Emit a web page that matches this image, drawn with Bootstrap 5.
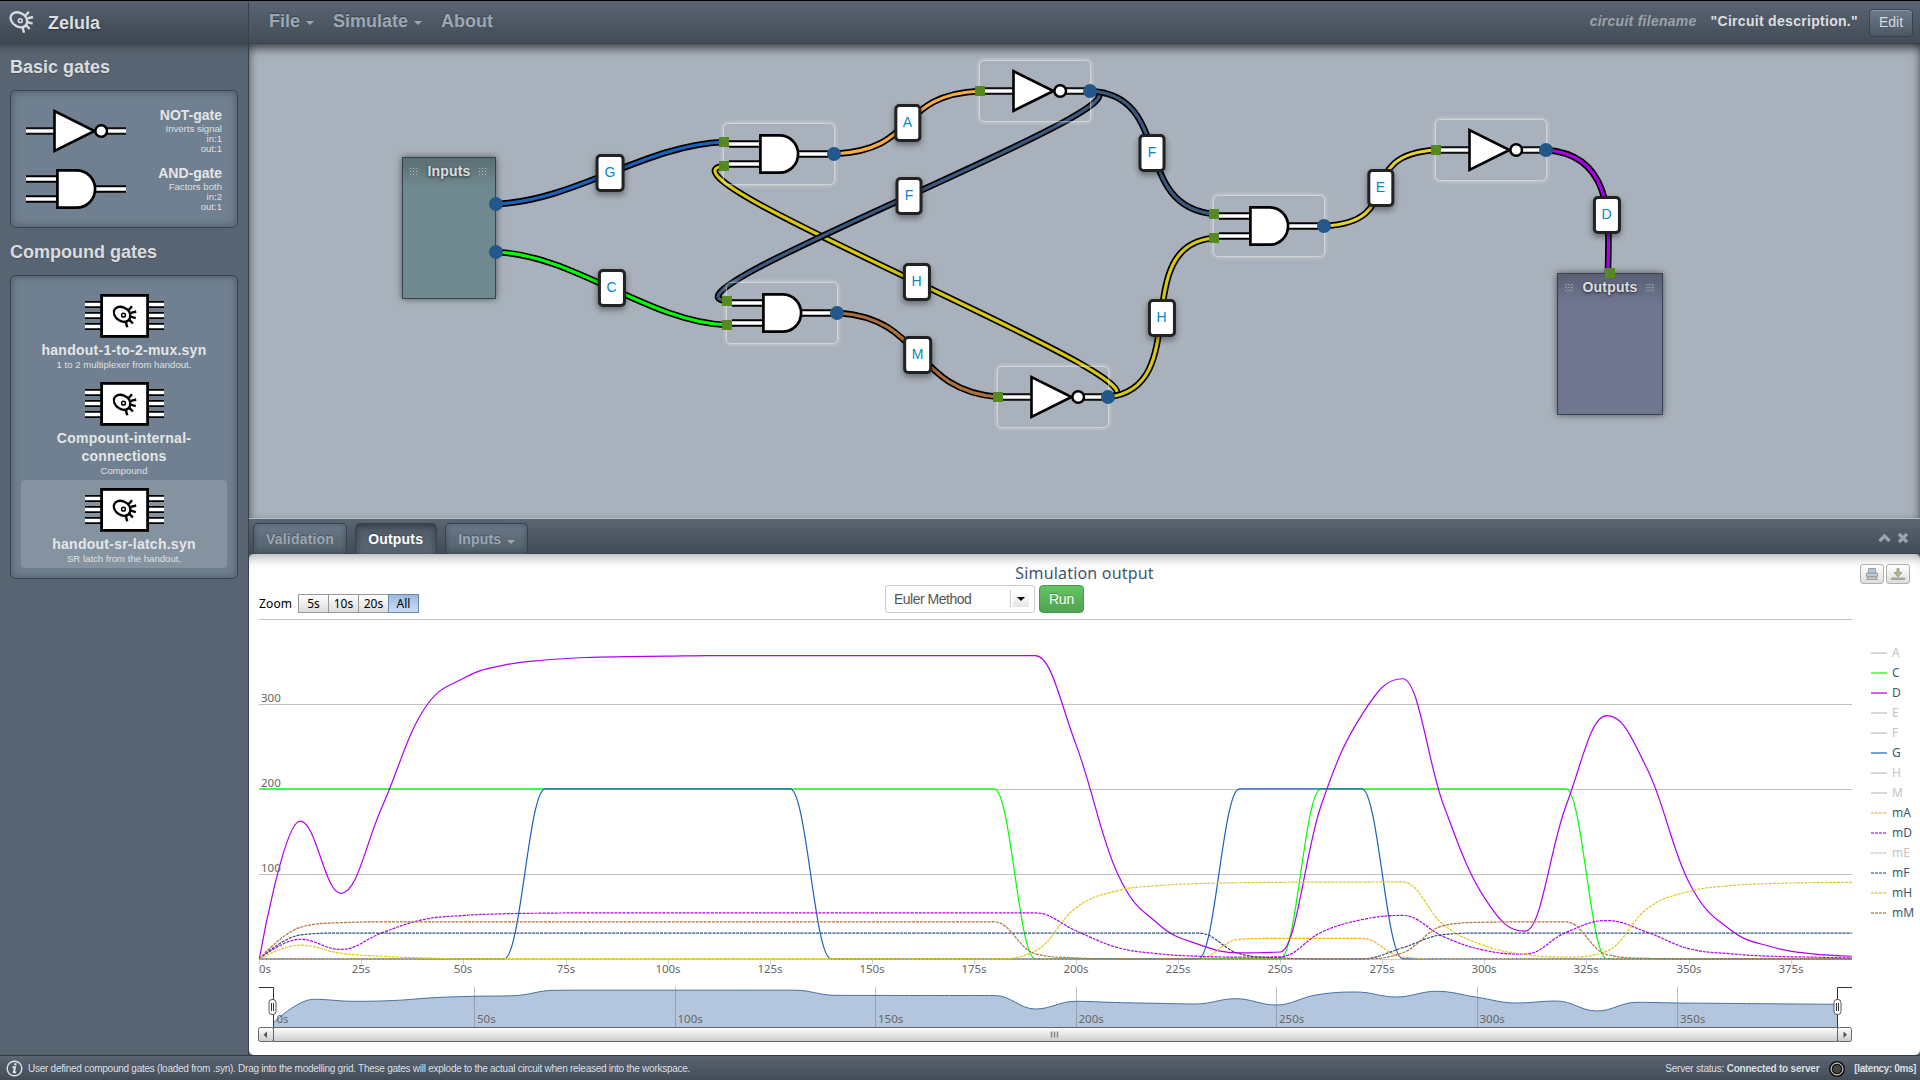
<!DOCTYPE html>
<html lang="en">
<head>
<meta charset="utf-8">
<title>Zelula</title>
<link href="https://cdn.jsdelivr.net/npm/bootstrap@5.3.0/dist/css/bootstrap.min.css" rel="stylesheet">
<style>
body{font-family:"Liberation Sans",Arial,sans-serif;font-size:14px;line-height:18px;color:#dcdee0;background:#000;height:1080px;overflow:hidden;padding-top:1px}
.bar{background:linear-gradient(#5a6573,#434c56);border-bottom:1px solid #36424f;height:43px}
.brandbox{width:249px;border-right:1px solid #36424f;background:linear-gradient(#556070,#3e4751);font-size:18px;font-weight:bold;padding:0 0 0 9px}
.brandbox span{margin:1px 0 0 14px;text-shadow:0 1px 2px #0006}
.topnav{padding-left:20px;gap:19px;font-size:18px;font-weight:bold;text-shadow:0 -1px 1px #0005;margin-top:-1px}
.topnav .nav-link{color:#9ba7b4;padding:0 0 2px;line-height:32px;display:flex;align-items:center}
.caret{display:inline-block;border:4px solid transparent;border-top-color:currentColor;border-bottom:0;margin:5px 0 0 6px}
.fname{color:#9ba1a9;font-style:italic;font-weight:bold;letter-spacing:.26px}
.desc{font-weight:bold;margin:0 11px 0 14px;letter-spacing:.3px}
.fname,.desc{padding-bottom:2px}
.editbtn{width:44px;height:28px;padding:0;font-size:14px;border:1px solid #36424f;border-radius:4px;color:#d4d8dc;background:linear-gradient(#6c7c8c,#4b5663);box-shadow:inset 0 1px #8694a3;margin:1px 7px 0 0}
.side{width:249px;background:#596473;border-right:1px solid #36424f;padding:0 10px;box-shadow:inset 0 9px 10px -8px #0007}
.side h2{font-size:18px;font-weight:bold;line-height:20px;margin:0;padding-top:13px;color:#dadcdf;text-shadow:0 1px 1px #0003}
.palette{width:228px;background:#708090;border:1px solid #36424f;border-radius:5px;box-shadow:inset 0 0 9px #0005;padding:10px}
.gate-item{height:58px;padding:5px 5px 5px 5px;text-align:right}
.gate-item b,.comp b{display:block;line-height:18px;font-size:14px;color:#e3e6e9}
.comp b{letter-spacing:.25px}
.gate-item i,.comp i{display:block;font-style:normal;font-size:9.6px;line-height:10px;color:#dde1e5}
.gate-item i:last-child{margin-bottom:-2px}
.comp{padding:8px 5px 4px;text-align:center;border-radius:4px}
.comp svg{display:block;margin:0 auto 3px}
.comp i{line-height:11px}
.comp.active{background:#ffffff26}
.stage{height:474px;background:#a9b2bc;box-shadow:inset 0 6px 12px -2px #0007,inset 0 3px 9px -1px #0006;position:relative;overflow:hidden}
.stage>svg{position:absolute;left:0;top:0}
.gatebox{position:absolute;width:112px;height:62px;border:1px solid #ffffff73;border-radius:5px;padding:5px;box-shadow:0 0 4px #ffffff80}
.gatebox svg{display:block}
.wtag{position:absolute;transform:translate(-50%,-50%);height:38px;min-width:27px;padding:4px 6px 0;text-align:center;color:#08c;background:#fff;border:3px solid #222;border-radius:5px;box-shadow:0 3px 6px #0006;line-height:22px}
.iobox{position:absolute;height:142px;border:1px solid #36424f;background:linear-gradient(#0003,#0000 30px) #70898f;box-shadow:0 0 7px #0008;text-align:center;font-weight:bold;letter-spacing:.2px;padding-top:4px;text-shadow:0 1px 3px #000a;display:flex;justify-content:center;align-items:flex-start;gap:8px}
.iobox.out{background-color:#707690}
.grip{width:9px;height:9px;margin-top:6px;background:repeating-linear-gradient(90deg,#0000 0 1px,#70808a 1px 3px,#0000 3px 3px),repeating-linear-gradient(#d5dadb 0 1px,#0000 1px 3px);opacity:.6}
.dot,.sq{position:absolute;transform:translate(-50%,-50%);width:14px;height:14px;border-radius:50%;background:#25588a}
.sq{width:10px;height:10px;border-radius:0;background:#568922}
.tabs{height:36px;border-top:1px solid #b4bec9;background:linear-gradient(#5a6573,#434c56);border-bottom:1px solid #36424f;padding:4px 12px 0 4px;gap:8px}
.tabs .nav-link{height:31px;min-width:82px;border:1px solid #36424f;border-bottom:0;border-radius:5px 5px 0 0;padding:0 12px;font-weight:bold;letter-spacing:.2px;line-height:31px;color:#9ba7b4;background:linear-gradient(#6b7b8a,#515d6a);box-shadow:inset 0 0 6px #0004;display:flex;align-items:center;text-shadow:0 -1px 1px #0004}
.tabs .nav-link:first-child{min-width:94px}
.tabs .nav-link.active{color:#fff;background:linear-gradient(#505b68,#5a6573);box-shadow:inset 0 2px 6px #0006}
.panelwrap{background:#596473}
.output{height:501px;background:#fff;border-radius:5px;box-shadow:inset 0 13px 12px -10px #0005;color:#000;font-family:"Noto Sans",sans-serif}
.titlerow{height:31px;display:grid;grid-template-columns:1fr auto 1fr}
.charttitle{font-size:16px;line-height:38px;letter-spacing:.18px;color:#3e576f}
.exports{padding:10px 10px 0 0;gap:2px}
.expbtn{width:24px;height:20px;border:1px solid #b0b0b0;border-radius:3px;background:linear-gradient(#fff,#ddd);padding:0;display:flex;align-items:center;justify-content:center}
.ctl{height:28px;padding-left:10px}
.zoombox{width:626px;font-size:12px;padding-top:9px}
.zoomlabel{width:39px;padding-top:1px;letter-spacing:.15px}
.zbtn{width:31px;height:19px;margin-right:-1px;border:1px solid #999;background:linear-gradient(#fff,#dcdcdc);font-size:12px;line-height:17px;padding:0;text-align:center;color:#000}
.zbtn.on{border-color:#68a;background:linear-gradient(#9bbadf,#cbdcf9)}
.method{width:150px;height:28px;border:1px solid #ccc;border-radius:3px;font:14px/27px "Liberation Sans",Arial,sans-serif;letter-spacing:-.5px;color:#555;padding-left:8px}
.method u{width:16px;height:17px;margin:4px 5px 0 0;background:linear-gradient(#fff,#e6e6e6);box-shadow:-2px 0 #fff,-3px 0 #ccc;display:flex;align-items:center;justify-content:center}
.method u::after{content:"";border:4px solid transparent;border-top-color:#000;border-bottom:0}
.runbtn{width:45px;height:28px;margin-left:4px;border:1px solid #479a47;border-radius:4px;background:linear-gradient(#62c462,#51a351);font:14px/26px "Liberation Sans",Arial,sans-serif;color:#fff;padding:0;letter-spacing:-.2px;text-shadow:0 -1px #0004}
.chart text{font-family:"Noto Sans",sans-serif;font-size:11.5px;fill:#666}
.chart .leg{font-size:12px;fill:#3e576f}
.chart .leg.off{fill:#c4c4c4}
.statusbar{height:25px;border-top:1px solid #2f3b47;background:linear-gradient(#5a6573,#434c56);font-size:10px;letter-spacing:-.255px;padding:1px 4px 0 6px;color:#dcdfe2}
#compound{margin-top:11px}
#compoundhead{padding-top:12px;line-height:24px}
#basic{margin-top:13px}
#hint{margin-left:5px}
#led{margin:0 9px 0 10px}
#srv{letter-spacing:-.21px}
#lat{letter-spacing:-.4px}
</style>
</head>
<body>
<svg width="0" height="0" class="position-absolute">
<defs>
<g id="cell" fill="none" stroke="currentColor" stroke-width="2.3"><path d="M5.5 1.7C9 .4 15 2.4 17.2 6.5C19.4 11 17.5 15.4 13.4 16.2C9 17 4 14 2.2 9.6C.8 6 2 3 5.5 1.7Z"/><circle cx="11.3" cy="9.7" r="1.9" stroke-width="1.5"/><path stroke-width="2.4" d="M16.6 4.6L19.8.8M18.6 7.4L24 6M18.6 11.2L23.6 12.6M17.2 14.4L20.7 18M13.6 16.5L15 21.8"/></g>
<g id="not"><path stroke="#000" stroke-width="7.4" d="M0 25H28M80 25H100"/><path stroke="#fff" stroke-width="3.4" d="M0 25H28M80 25H100"/><path stroke="#444" stroke-width=".8" opacity=".6" d="M0 22H28M80 22H100M0 28H28M80 28H100"/><path fill="#fff" stroke="#000" stroke-width="2.6" d="M28.5 5.2V44.8L68.5 25Z"/><circle cx="75.2" cy="25" r="5.8" fill="#fff" stroke="#000" stroke-width="2.5"/></g>
<g id="and"><path stroke="#000" stroke-width="7.4" d="M0 15H31M0 35H31M70 25H100"/><path stroke="#fff" stroke-width="3.4" d="M0 15H31M0 35H31M70 25H100"/><path fill="#fff" stroke="#000" stroke-width="2.7" d="M31.4 6.3H50.5A18.6 18.7 0 0 1 50.5 43.7H31.4Z"/></g>
<g id="chip"><path stroke="#000" stroke-width="7.2" d="M0 10.5H16M0 21.5H16M0 32.5H16M63 10.5H79M63 21.5H79M63 32.5H79"/><path stroke="#fff" stroke-width="3.4" d="M0 10.5H16M0 21.5H16M0 32.5H16M63 10.5H79M63 21.5H79M63 32.5H79"/><rect x="16.6" y="1.4" width="46" height="41" fill="#fff" stroke="#000" stroke-width="2.8"/><use href="#cell" x="27.2" y="11.5" color="#000"/></g>
</defs></svg>

<div class="d-flex flex-column">
<header class="bar d-flex">
  <div class="brandbox d-flex align-items-center"><svg width="25" height="23" color="#dadcde"><use href="#cell"/></svg><span>Zelula</span></div>
  <nav class="topnav nav flex-grow-1"><a class="nav-link">File<i class="caret"></i></a><a class="nav-link">Simulate<i class="caret"></i></a><a class="nav-link">About</a></nav>
  <div class="d-flex align-items-center"><span class="fname">circuit filename</span><span class="desc">"Circuit description."</span><button class="btn editbtn">Edit</button></div>
</header>

<div class="d-flex">
  <aside class="side">
    <h2>Basic gates</h2>
    <div class="palette" id="basic">
      <div class="gate-item d-flex justify-content-between"><svg width="100" height="50"><use href="#not"/></svg><div><b>NOT-gate</b><i>Inverts signal</i><i>in:1</i><i>out:1</i></div></div>
      <div class="gate-item d-flex justify-content-between"><svg width="100" height="50"><use href="#and"/></svg><div><b>AND-gate</b><i>Factors both</i><i>in:2</i><i>out:1</i></div></div>
    </div>
    <h2 id="compoundhead">Compound gates</h2>
    <div class="palette" id="compound">
      <div class="comp"><svg width="79" height="44"><use href="#chip"/></svg><b>handout-1-to-2-mux.syn</b><i>1 to 2 multiplexer from handout.</i></div>
      <div class="comp"><svg width="79" height="44"><use href="#chip"/></svg><b>Compount-internal-<br>connections</b><i>Compound</i></div>
      <div class="comp active"><svg width="79" height="44"><use href="#chip"/></svg><b>handout-sr-latch.syn</b><i>SR latch from the handout.</i></div>
    </div>
  </aside>

  <main class="flex-grow-1 panelwrap">
    <div class="stage" id="stage"><svg id="wires" width="1671" height="474" viewBox="249 44 1671 474" fill="none"></svg></div>
    <div class="tabs nav">
      <a class="nav-link">Validation</a><a class="nav-link active">Outputs</a><a class="nav-link">Inputs<i class="caret"></i></a>
      <svg class="ms-auto" width="30" height="30" fill="none" stroke="#99a3ae" stroke-width="3.2"><path d="M1.5 18L6.500 13L11.500 18M21 11L29 19M29 11L21 19"/></svg>
    </div>
    <section class="output">
      <div class="titlerow"><span></span><span class="charttitle">Simulation output</span>
        <div class="exports d-flex justify-content-end">
          <button class="expbtn"><svg width="14" height="14" fill="#b5c9df" stroke="#a0a0a0"><path d="M3.500 1.500H10.500V6H3.500ZM1.500 6H12.500V9.500H1.500ZM3 10H11L12.500 12.500H1.500Z"/></svg></button>
          <button class="expbtn"><svg width="14" height="14" fill="#a8bf77" stroke="#a0a0a0"><path d="M6 1.500H8V5.500H11L7 10L3 5.500H6ZM.5 11H13.500V12.500H.5Z"/></svg></button>
        </div></div>
      <div class="ctl d-flex"><div class="zoombox d-flex"><span class="zoomlabel">Zoom</span><button class="zbtn">5s</button><button class="zbtn">10s</button><button class="zbtn">20s</button><button class="zbtn on">All</button></div>
        <div class="method d-flex justify-content-between">Euler Method<u></u></div><button class="runbtn">Run</button></div>
      <svg id="chart" class="chart d-block" width="1671" height="442" viewBox="249 613 1671 442" fill="none"></svg>
    </section>
  </main>
</div>

<footer class="statusbar d-flex align-items-center">
  <svg width="17" height="17" fill="none" stroke="#dfe2e5"><circle cx="8.500" cy="8.500" r="7.300" stroke-width="1.400"/><path stroke-width="2.200" d="M9.600 3.200L9.200 5.300"/><path stroke-width="2" d="M6.500 7.300H9L7.800 12.300H10.200"/></svg>
  <span id="hint">User defined compound gates (loaded from .syn). Drag into the modelling grid. These gates will explode to the actual circuit when released into the workspace.</span>
  <span class="ms-auto" id="srv">Server status: <b>Connected to server</b></span>
  <svg id="led" width="16" height="16"><circle cx="8" cy="8" r="7" fill="#333" stroke="#111" stroke-width="2"/><circle cx="8" cy="8" r="6" fill="#3c3c3c" stroke="#ddd" stroke-width="1"/><circle cx="8" cy="8" r="4.500" fill="#444" stroke="#111"/></svg>
  <b id="lat">[latency: 0ms]</b>
</footer>
</div>
<script>
const stage=document.getElementById('stage'),OX=249,OY=44;
function place(cls,x,y,html,w){const e=document.createElement('div');e.className=cls;e.style.left=(x-OX)+'px';e.style.top=(y-OY)+'px';if(w)e.style.width=w+'px';e.innerHTML=html||'';stage.appendChild(e)}
const wires=[
['#e8d22f','M1324 226C1410 222 1350 155 1436 150'],['#b000f0','M1546 150C1618 155 1608 230 1608 273'],
['#1c62bd','M496 204C575 201 645 145 724 142'],['#00ff00','M496 252C575 255 648 322 727 325'],
['#fcae3c','M834 154C920 150 895 95 980 91'],['#d8c90e','M1108 397C1194 390 638 174 724 166'],
['#3b5a80','M1090 91C1175 97 643 295 727 301'],['#3b5a80','M1090 91C1175 95 1130 206 1214 214'],
['#b0703c','M838 313C925 318 912 390 998 397'],['#d8c90e','M1108 397C1195 388 1127 245 1214 238']];
document.getElementById('wires').innerHTML=wires.map(([c,d])=>`<path d="${d}" stroke="#000" stroke-width="6.600"/><path d="${d}" stroke="${c}" stroke-width="3.200"/>`).join('');
[['and',723,123],['and',726,282],['and',1213,195],['not',979,60],['not',997,366],['not',1435,119]].forEach(([k,x,y])=>place('gatebox',x,y,`<svg width="100" height="50"><use href="#${k}"/></svg>`));
place('iobox',402,157,'<i class="grip"></i>Inputs<i class="grip"></i>',94);
place('iobox out',1557,273,'<i class="grip"></i>Outputs<i class="grip"></i>',106);
[[496,204],[496,252],[834,154],[837,313],[1324,226],[1090,91],[1108,397],[1546,150]].forEach(p=>place('dot',...p));
[[724,142],[724,166],[727,301],[727,325],[1214,214],[1214,238],[980,91],[998,397],[1436,150],[1610,273]].forEach(p=>place('sq',...p));
[['G',610,173],['C',611.5,288],['A',907.5,123],['F',909,196],['H',916.5,282],['M',917.5,355],['F',1152,153],['H',1161.5,318],['E',1380.5,188],['D',1606.5,215]].forEach(([l,x,y])=>place('wtag',x,y,l));

/* smooth curve through the samples, without overshoot */
function spline(p){let d=`M${p[0]}`,r=p[0];
 for(let i=1;i<p.length;i++){const [x,y]=p[i],[a,b]=p[i-1];let lx=x,ly=y,rx=x,ry=y;
  if(i<p.length-1){const [n,m]=p[i+1];lx=(1.5*x+a)/2.5;ly=(1.5*y+b)/2.5;rx=(1.5*x+n)/2.5;ry=(1.5*y+m)/2.5;
   const c=(ry-ly)*(rx-x)/(rx-lx)+y-ry;ly+=c;ry+=c;
   if(ly>b&&ly>y){ly=Math.max(b,y);ry=2*y-ly}else if(ly<b&&ly<y){ly=Math.min(b,y);ry=2*y-ly}
   if(ry>m&&ry>y){ry=Math.max(m,y);ly=2*y-ry}else if(ry<m&&ry<y){ry=Math.min(m,y);ly=2*y-ry}}
  d+=`C${r} ${lx},${ly} ${x},${y}`;r=[rx,ry]}
 return d}
const rep=(v,n)=>Array(n).fill(v);
const S=[
['#00ff00',0,[...rep(200,19),...rep(0,7),...rep(200,7),...rep(0,7)]],
['#b000f0',0,[0,162,77,178,291,330,345.5,351.5,354.5,355.5,356,...rep(356.6,9),252,102,41.5,17,7,8,180,287,329.5,181,72,32.5,180,286,222,91,35,14.5,6,3]],
['#1c62bd',0,[...rep(0,7),...rep(200,7),...rep(0,10),...rep(200,4),...rep(0,12)]],
['#fcae3c',1,[...rep(0,24),23,24,24,24,2,...rep(0,11)]],
['#b000f0',1,[0,23,11,30.5,46,51,53,53.7,...rep(54,12),33,13.5,6,3,2,2.3,31,46,51,26,10,5.5,31,45,31,12,6,3,2,1]],
['#2c4c74',1,[0,28,...rep(30.3,22),6,1,0,0,13,28.5,...rep(30.3,10)]],
['#dccb1c',1,[0,16,6.5,3,1,...rep(0,14),9,60,80,86,88.5,89.5,90,90.3,90.3,90.5,40,15.5,5,2,9,59.5,79,86,88.500,89.5,90]],
['#b0703c',1,[0,37,42.5,...rep(43.4,16),6,1,...rep(0,7),7,39,43,43.4,43.4,5,.5,...rep(0,5)]]];
const X=t=>259.3+4.0835*t,Y=v=>958.8-.85*v;let h='';
for(let v=0;v<=400;v+=100)h+=`<path d="M259 ${959.5-.85*v}H1852" stroke="${v?'#c0c0c0':'#c0d0e0'}"/>`;
for(let t=0;t<=375;t+=25){const x=Math.round(X(t))+.5;h+=`<path d="M${x} 960V964" stroke="#c0d0e0"/><text x="${t?x-.5:259}" y="973" ${t?'text-anchor="middle"':''}>${t}s</text>`}
S.forEach(([c,d,v])=>h+=`<path d="${spline(v.map((q,i)=>[X(i*10),Y(q)]))}" stroke="${c}" stroke-width="1.2" ${d?'stroke-dasharray="3 1"':''}/>`);
[100,200,300].forEach(v=>h+=`<text x="261" y="${956.5-.85*v}">${v}</text>`);
const nav=[1022.7,999.3,1001.3,1000.5,997.7,996.3,995.7,990.3,990.2,990.2,990.2,990.2,990.2,990.2,995.3,995.4,995.5,995.5,995.6,1009,1001.3,1002.5,1003.3,1004,998.7,1005,995,992,997,991.3,997.2,1003,1001,1011,1002.3,1003,1003.3,1003.7,1004,1004.3];
const N=t=>273.5+4.01*t,ns=spline(nav.map((y,i)=>[N(i*10),y]));
h+=`<path d="${ns}V1027H273.500Z" fill="#b4c6dd"/><path d="${ns}" stroke="#4572a7"/>`;
for(let t=0;t<=350;t+=50){if(t)h+=`<path d="M${Math.round(N(t))+.5} 987V1027" stroke="#606878" opacity=".4"/>`;h+=`<text x="${N(t)+3}" y="1023">${t}s</text>`}
h+=`<defs><linearGradient id="sg" x2="0" y2="1"><stop stop-color="#fff"/><stop offset="1" stop-color="#ccc"/></linearGradient></defs>
<path d="M259 987.500H273.500V1027M1852 987.500H1837.500V1027" stroke="#333"/>
<rect x="273.500" y="1027.500" width="1564" height="14" fill="url(#sg)" stroke="#666"/>
<rect x="258.500" y="1027.500" width="15" height="14" rx="2" fill="url(#sg)" stroke="#666"/><rect x="1837.500" y="1027.500" width="14" height="14" rx="2" fill="url(#sg)" stroke="#666"/>
<path d="M267 1031.500V1038L263.500 1034.700ZM1843.500 1031.500V1038L1847 1034.700Z" fill="#555"/>
<path d="M1051.500 1031.500V1037.500M1054.500 1031.500V1037.500M1057.500 1031.500V1037.500" stroke="#888" stroke-width="1.500"/>`;
[272.5,1837.5].forEach(x=>h+=`<rect x="${x-3.5}" y="999.500" width="7" height="15" rx="3" fill="#fff" stroke="#555"/><path d="M${x-1} 1003V1011M${x+1} 1003V1011" stroke="#333"/>`);
[['A'],['C','#66ff66'],['D','#d060f6'],['E'],['F'],['G','#76a0d8'],['H'],['M'],['mA','#fdce8a'],['mD','#d070f8'],['mE'],['mF','#8a9db5'],['mH','#e8de70'],['mM','#d0a98a']].forEach(([n,c],i)=>{const y=653+20*i;
 h+=`<path d="M1871 ${y}H1887" stroke="${c||'#d8d8d8'}" stroke-width="2" ${n[1]?'stroke-dasharray="3 1"':''}/><text class="leg ${c?'':'off'}" x="1892" y="${y+4}">${n}</text>`});
document.getElementById('chart').innerHTML=h;
</script>
<script src="https://cdn.jsdelivr.net/npm/bootstrap@5.3.0/dist/js/bootstrap.bundle.min.js"></script>
</body>
</html>
